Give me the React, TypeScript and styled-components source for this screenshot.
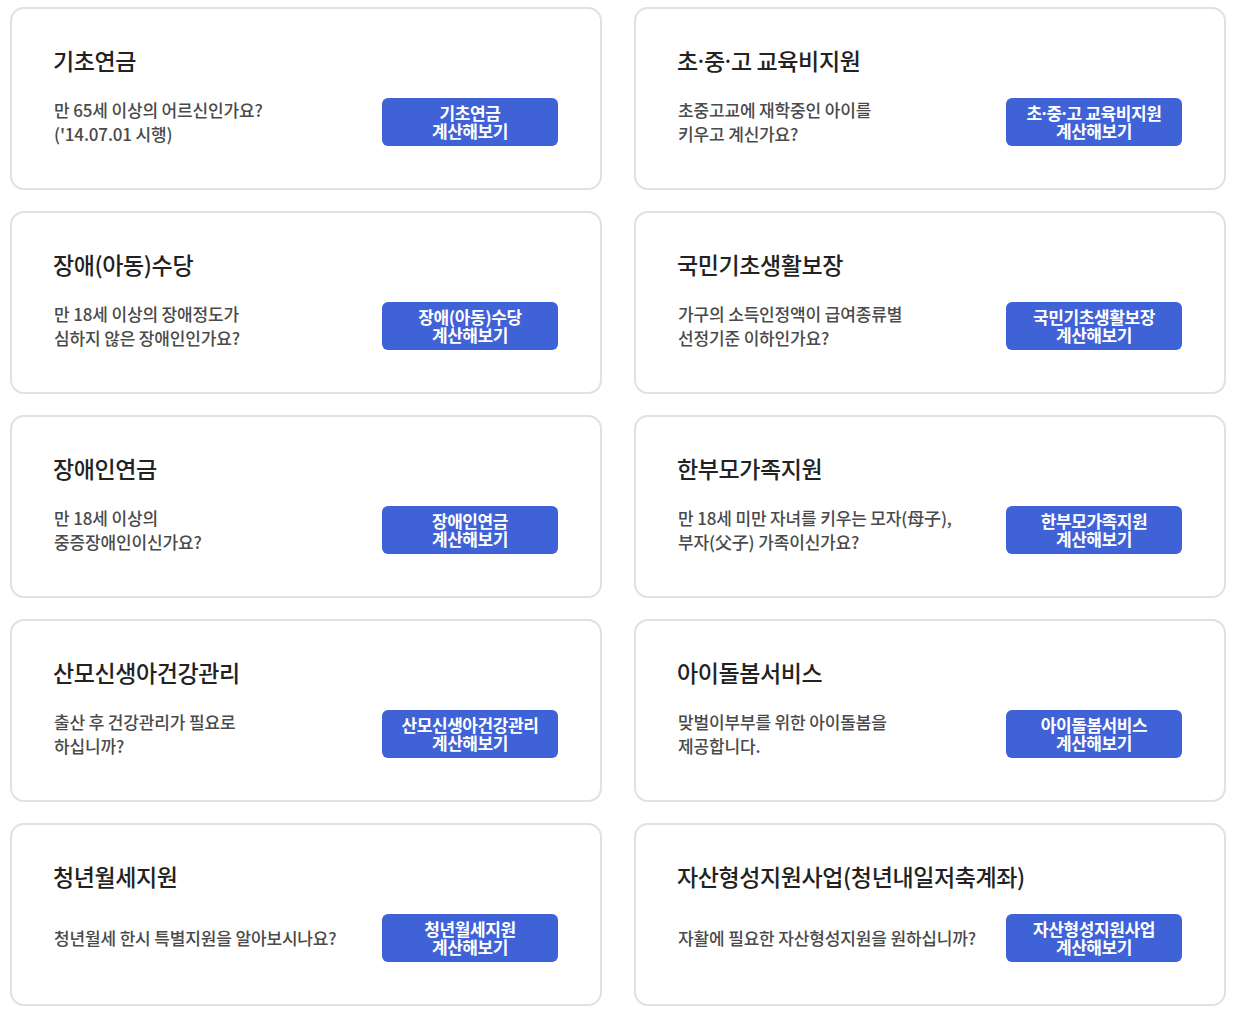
import React from "react";
import styled, { createGlobalStyle } from "styled-components";

const GlobalStyle = createGlobalStyle`
  html, body { margin: 0; padding: 0; background: #fff; }
  body { font-family: "Noto Sans CJK KR", "Noto Sans", sans-serif; }
  * { box-sizing: border-box; }
`;

const Grid = styled.div`
  display: grid;
  grid-template-columns: 592px 592px;
  column-gap: 32px;
  row-gap: 21px;
  padding: 7px 11px 8px 10px;
`;

const Card = styled.div`
  border: 2px solid #e1e1e1;
  border-radius: 14px;
  background: #fff;
  padding: 40px 42px 42px 41px;
  display: flex;
  flex-direction: column;
  gap: 27px;
`;

const Title = styled.h3`
  margin: 0;
  height: 22px;
  font-size: 23px;
  line-height: 22px;
  font-weight: 500;
  color: #222;
  letter-spacing: -0.4px;
`;

const Row = styled.div`
  display: flex;
  align-items: center;
  justify-content: space-between;
  min-height: 48px;
`;

const Desc = styled.p`
  margin: 0;
  font-size: 17px;
  line-height: 24px;
  font-weight: 500;
  color: #4a4a4a;
  letter-spacing: -0.15px;
  white-space: pre-line;
  padding-left: 1px;
`;

const CalcButton = styled.button`
  width: 176px;
  height: 48px;
  flex: none;
  border: none;
  border-radius: 6px;
  background: #4062d7;
  color: #fff;
  font-family: "Noto Sans CJK KR", "Noto Sans", sans-serif;
  font-size: 17px;
  line-height: 18px;
  font-weight: 700;
  letter-spacing: -0.4px;
  white-space: pre-line;
  padding: 0;
  cursor: pointer;
`;

const Dot = styled.span`
  font-family: "Noto Sans", sans-serif;
  letter-spacing: 0;
  line-height: 0;
`;

function withDots(text: string) {
  const parts = text.split("·");
  return parts.map((p, i) => (
    <React.Fragment key={i}>
      {i > 0 && <Dot>·</Dot>}
      {p}
    </React.Fragment>
  ));
}

type Item = { title: string; desc: string; btn: string };

const items: Item[] = [
  { title: "기초연금", desc: "만 65세 이상의 어르신인가요?\n('14.07.01 시행)", btn: "기초연금" },
  { title: "초·중·고 교육비지원", desc: "초중고교에 재학중인 아이를\n키우고 계신가요?", btn: "초·중·고 교육비지원" },
  { title: "장애(아동)수당", desc: "만 18세 이상의 장애정도가\n심하지 않은 장애인인가요?", btn: "장애(아동)수당" },
  { title: "국민기초생활보장", desc: "가구의 소득인정액이 급여종류별\n선정기준 이하인가요?", btn: "국민기초생활보장" },
  { title: "장애인연금", desc: "만 18세 이상의\n중증장애인이신가요?", btn: "장애인연금" },
  { title: "한부모가족지원", desc: "만 18세 미만 자녀를 키우는 모자(母子),\n부자(父子) 가족이신가요?", btn: "한부모가족지원" },
  { title: "산모신생아건강관리", desc: "출산 후 건강관리가 필요로\n하십니까?", btn: "산모신생아건강관리" },
  { title: "아이돌봄서비스", desc: "맞벌이부부를 위한 아이돌봄을\n제공합니다.", btn: "아이돌봄서비스" },
  { title: "청년월세지원", desc: "청년월세 한시 특별지원을 알아보시나요?", btn: "청년월세지원" },
  { title: "자산형성지원사업(청년내일저축계좌)", desc: "자활에 필요한 자산형성지원을 원하십니까?", btn: "자산형성지원사업" },
];

export default function App() {
  return (
    <>
      <GlobalStyle />
      <Grid>
        {items.map((it) => (
          <Card key={it.title}>
            <Title>{withDots(it.title)}</Title>
            <Row>
              <Desc>{it.desc}</Desc>
              <CalcButton>
                {withDots(it.btn)}
                {"\n계산해보기"}
              </CalcButton>
            </Row>
          </Card>
        ))}
      </Grid>
    </>
  );
}
